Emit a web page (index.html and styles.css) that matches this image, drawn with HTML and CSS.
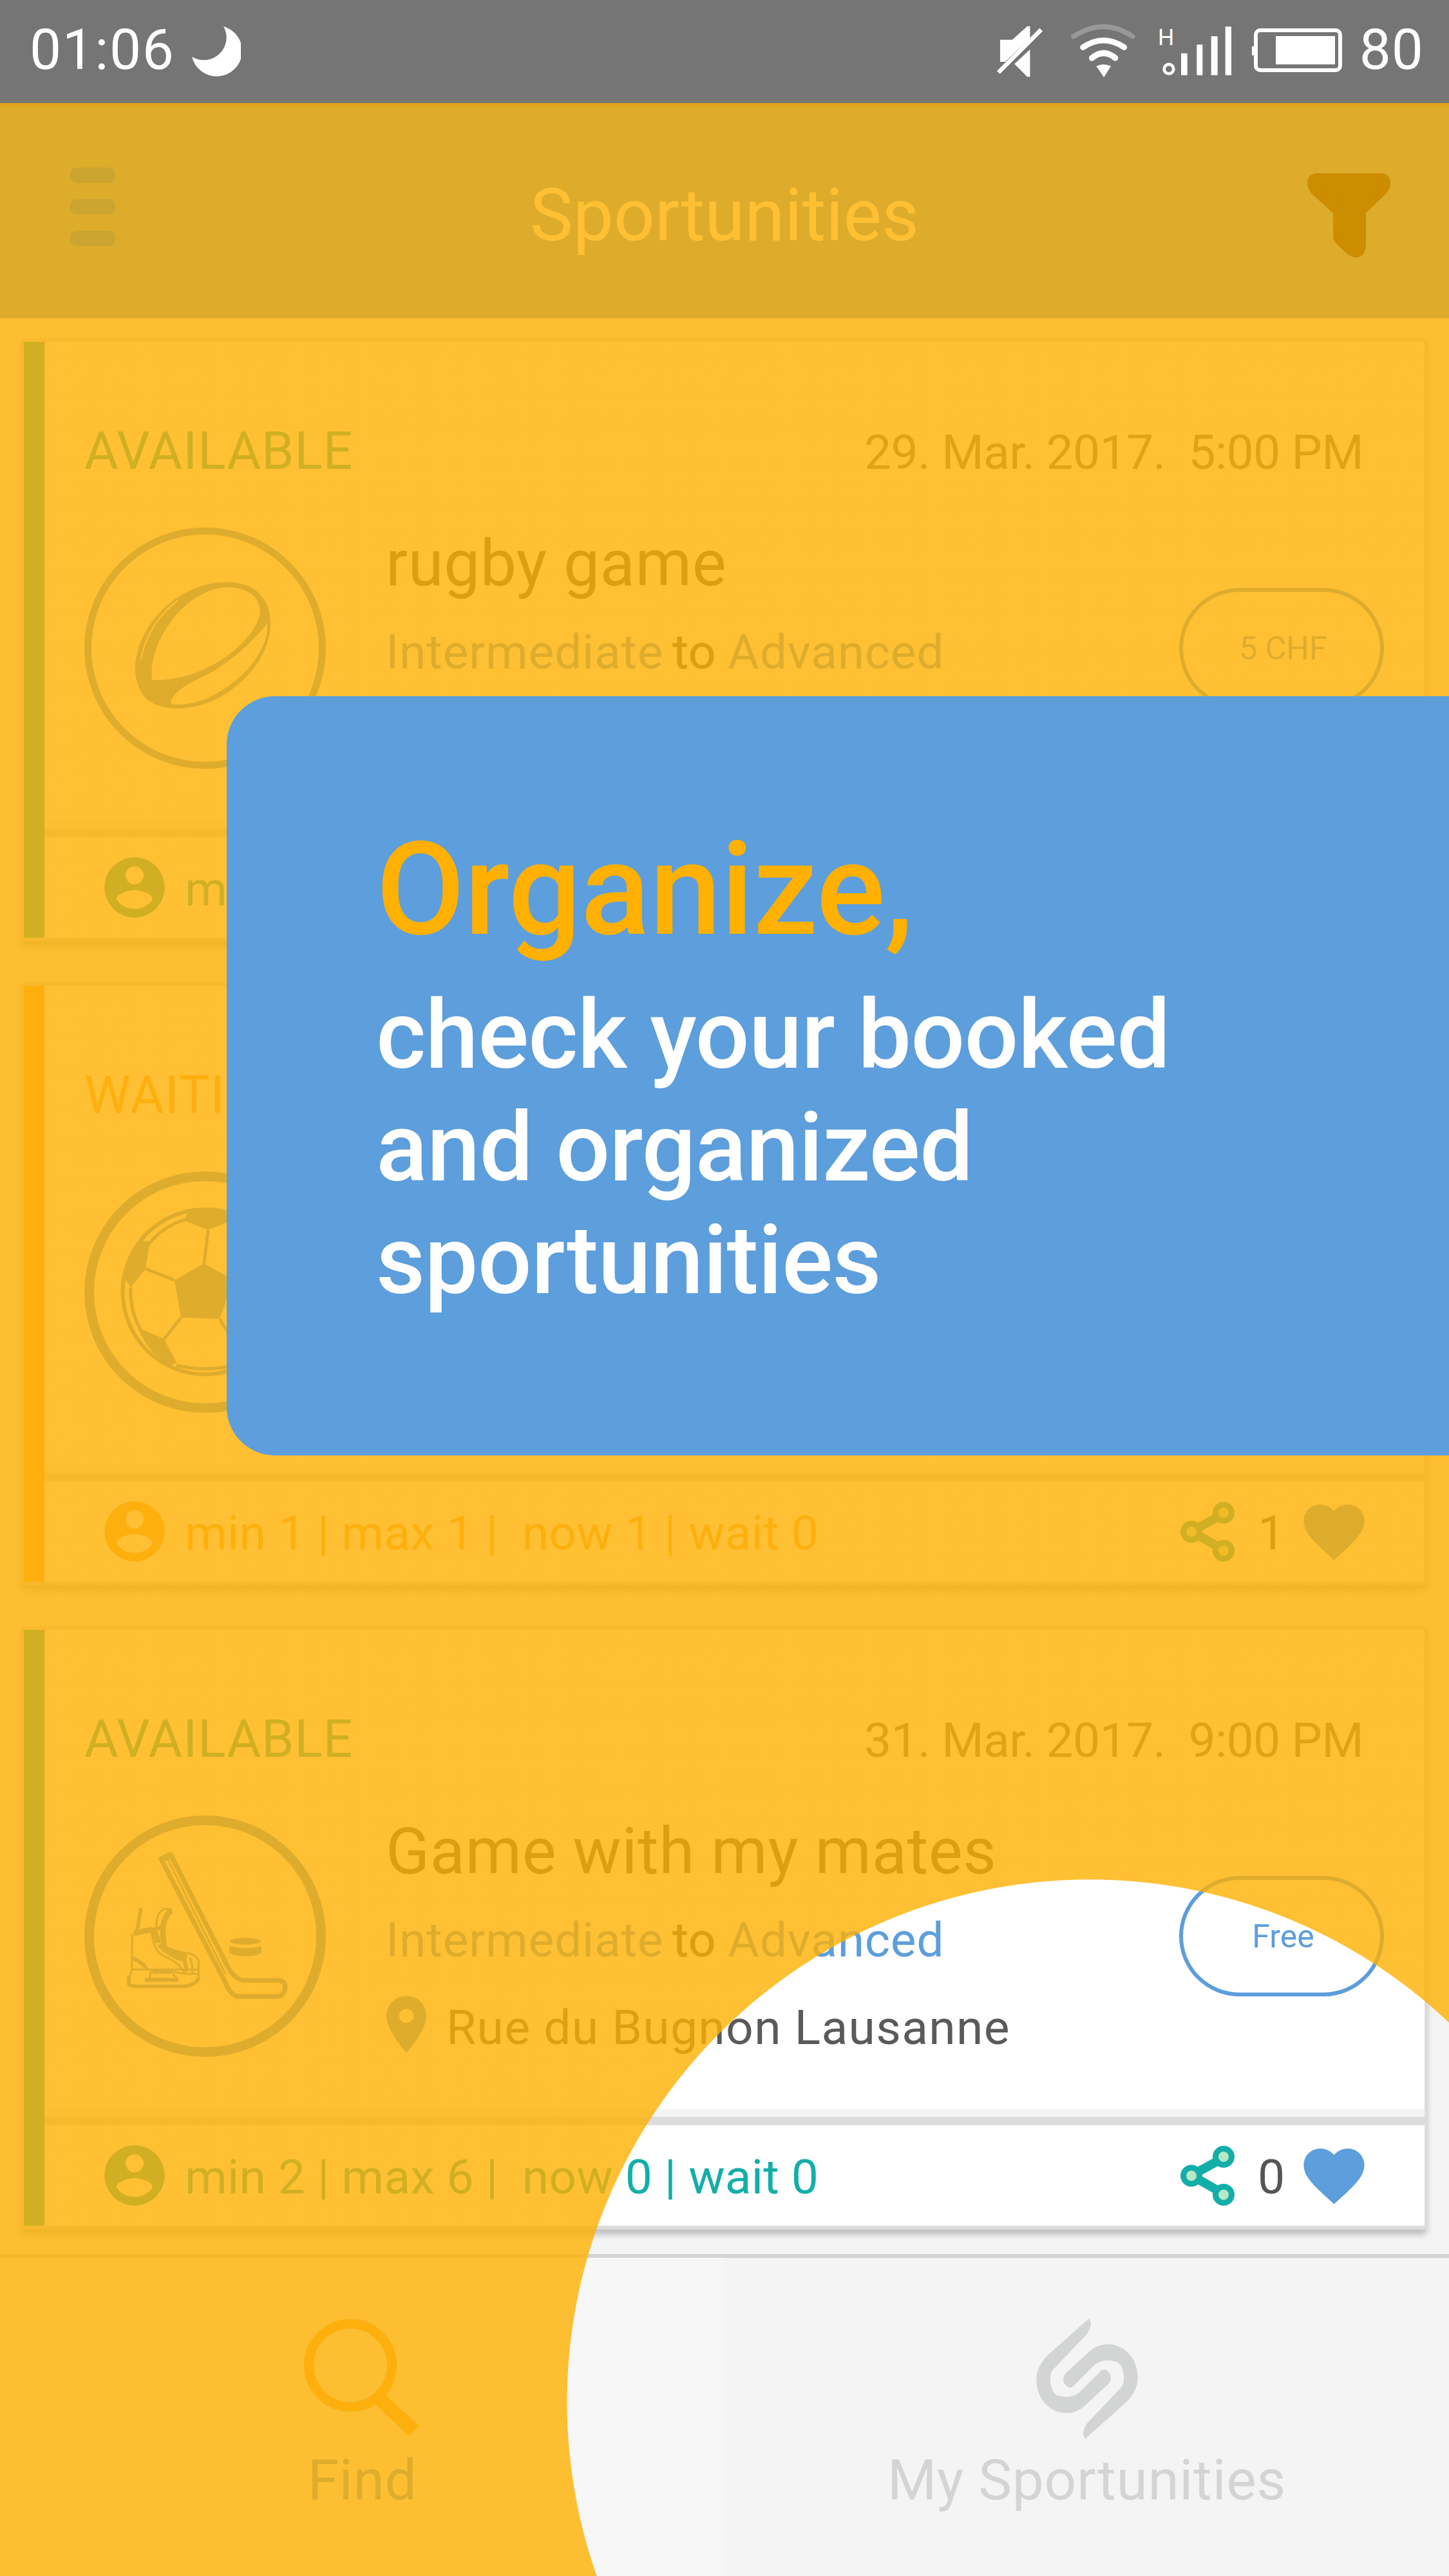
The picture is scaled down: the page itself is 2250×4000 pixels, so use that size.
FILE: index.html
```html
<!DOCTYPE html>
<html lang="en">
<head>
<meta charset="utf-8">
<title>Sportunities</title>
<link rel="stylesheet" href="styles.css">
</head>
<body>
<svg class="defs" aria-hidden="true">
  <symbol id="user" viewBox="0 0 24 24"><path d="M12 2C6.480 2 2 6.480 2 12s4.480 10 10 10 10-4.480 10-10S17.520 2 12 2zm0 3c1.660 0 3 1.340 3 3s-1.340 3-3 3-3-1.340-3-3 1.340-3 3-3zm0 14.200c-2.500 0-4.710-1.280-6-3.220.030-1.990 4-3.080 6-3.080 1.990 0 5.970 1.090 6 3.080-1.290 1.940-3.500 3.220-6 3.220z"/></symbol>
  <symbol id="heart" viewBox="0 0 24 24"><path d="M12 21.350l-1.450-1.320C5.400 15.360 2 12.280 2 8.500 2 5.420 4.420 3 7.500 3c1.740 0 3.410.810 4.500 2.090C13.090 3.810 14.760 3 16.500 3 19.580 3 22 5.420 22 8.500c0 3.780-3.400 6.860-8.550 11.540L12 21.350z"/></symbol>
  <symbol id="share" viewBox="0 0 86 95">
    <path d="M69 19 18 47 69 76" fill="none" stroke="#14aea9" stroke-width="14"/>
    <g fill="#b5e8c4" stroke="#14aea9" stroke-width="9"><circle cx="18" cy="47.500" r="12.500"/><circle cx="68" cy="18" r="12.500"/><circle cx="68" cy="77" r="12.500"/></g>
  </symbol>
</svg>
<div class="phone">
  <div class="statusbar">
    <span class="clock">01:06</span>
    <svg class="moon" viewBox="0 0 76 78"><path d="M49 0A39.500 39.500 0 1 1 0 47A35 35 0 0 0 49 0z" fill="#fff"/></svg>
    <svg class="mute" viewBox="20 90 220 240"><path d="M38 155H95L165 92H178V148L62 258H38z" fill="#fff"/><path d="M30 308 230 108" stroke="#fff" stroke-width="20"/><path d="M178 200V328H165L105 268z" fill="#fff"/></svg>
    <svg class="wifi" viewBox="365 80 305 250"><g fill="none" stroke-linecap="round"><path d="M379 139Q519 47 655 139" stroke="#989898" stroke-width="23"/><path d="M423 190Q519 125 616 190" stroke="#fff" stroke-width="27"/><path d="M465 240Q519 194 574 240" stroke="#fff" stroke-width="28"/></g><path d="M485 278Q519 262 554 278L521 330z" fill="#fff"/></svg>
    <svg class="signal" viewBox="760 60 360 290"><text x="775" y="180" font-size="104" textLength="76" lengthAdjust="spacingAndGlyphs" fill="#fff">H</text><circle cx="826" cy="291" r="22" fill="none" stroke="#fff" stroke-width="14"/><path d="M883 218h29v102h-29zM956 177h27v143h-27zM1023 138h30v182h-30zM1089 93h28v227h-28z" fill="#fff"/></svg>
    <svg class="battery" viewBox="0 0 140 68"><rect x="6" y="3" width="131" height="62" rx="7" fill="none" stroke="#fff" stroke-width="6"/><path d="M0 28h4v14H0zM37 12h92v44H37z" fill="#fff"/></svg>
    <span class="level">80</span>
  </div>

  <div class="app">
    <header class="header">
      <div class="menu"><i></i><i></i><i></i></div>
      <h1 class="title">Sportunities</h1>
      <svg class="funnel" viewBox="0 0 129 131"><path d="M14 0H116Q129 1 129 16Q129 25 121 33L91 62V112Q90 130 75 131Q66 130 56 120L44 108Q40 103 40 98V62L7 32Q0 24 0 14Q1 1 14 0z"/></svg>
    </header>

    <main class="list">
      <article class="card">
        <div class="stripe"></div>
        <div class="inner">
          <div class="top"><span class="status">AVAILABLE</span><time class="date">29. Mar. 2017.&nbsp; 5:00 PM</time></div>
          <div class="body">
            <svg class="sport" viewBox="0 0 375 375"><circle cx="187.500" cy="187.500" r="182" fill="none" stroke="#5d9edc" stroke-width="11"/>
              <path fill="#5d9edc" fill-rule="evenodd" d="M79 220C78 160 140 85 220 85C262 84 290 108 289 151C288 215 215 283 142 281C105 281 80 262 79 220zM105 237C98 175 160 94 222 93C260 93 280 115 270 143C254 185 182 240 105 237zM134 271C140 254 160 243 188 230C225 210 260 180 284 149C288 210 200 280 140 275Q134 275 134 271z"/>
              <path d="M88 205Q98 150 145 113" fill="none" stroke="#fff" stroke-width="2"/></svg>
            <div class="info">
              <h2 class="name">rugby game</h2>
              <p class="levels"><b>Intermediate</b><span>to</span><b>Advanced</b></p>
            </div>
            <div class="pill">5 CHF</div>
          </div>
          <div class="foot"><svg class="user"><use href="#user"/></svg><span class="count">min</span></div>
        </div>
      </article>

      <article class="card waiting">
        <div class="stripe"></div>
        <div class="inner">
          <div class="top"><span class="status">WAITING</span></div>
          <div class="body">
            <svg class="sport" viewBox="0 0 375 375"><g fill="none" stroke="#5d9edc"><circle cx="187.500" cy="187.500" r="180" stroke-width="15"/><circle cx="187.500" cy="187" r="128" stroke-width="6"/><path stroke-width="5" d="M192 91 186 143M95 151 140 169M150 227 124 260M210 229 229 260M232 170 278 151M164 73Q120 83 95 120M72 180Q70 220 92 254M143 301Q187 312 232 301"/></g>
              <path fill="#5d9edc" d="M186 143 140 169 150 227 210 229 232 169zM164 59 154 76 192 91 230 76 213 59Q187 54 164 59zM86 107 102 109 95 151 72 180 60 162Q66 130 86 107zM84 243 124 260 143 297 132 301Q95 278 84 243zM291 243 251 260 232 297 244 301Q282 278 291 243zM289 107 273 109 279 151 303 180 314 162Q309 130 289 107z"/></svg>
          </div>
          <div class="foot"><svg class="user"><use href="#user"/></svg><span class="count">min 1 | max 1 |&nbsp; now 1 | wait 0</span>
            <div class="actions"><svg class="share"><use href="#share"/></svg><span class="likes">1</span><svg class="heart"><use href="#heart"/></svg></div></div>
        </div>
      </article>

      <article class="card">
        <div class="stripe"></div>
        <div class="inner">
          <div class="top"><span class="status">AVAILABLE</span><time class="date">31. Mar. 2017.&nbsp; 9:00 PM</time></div>
          <div class="body">
            <svg class="sport" viewBox="33 27 1125 1125"><g fill="none" stroke="#5d9edc" stroke-linejoin="round"><circle cx="595.500" cy="589.500" r="540" stroke-width="45"/>
              <path stroke-width="22" d="M390 230 435 210 695 720Q730 795 780 795H930Q968 795 968 825Q968 870 930 870H750Q715 865 692 810z"/><path stroke-width="8" d="M418 225 690 765"/><path stroke-width="30" d="M390 232 438 212"/>
              <path stroke-width="17" d="M296 458 280 560M262 580 390 550M240 775V812Q245 822 270 823H500Q555 815 564 785"/>
              <path stroke-width="26" d="M440 470Q390 500 400 600L405 650 510 690M265 575 340 560Q370 570 375 620"/>
              <path stroke-width="9" d="M370 550Q365 475 410 462L440 465M256 580 254 745 240 790M256 690Q300 705 330 745Q430 750 500 765H565V700Q540 665 500 668Q440 655 415 640M345 560Q355 660 400 680Q480 715 500 765M525 690Q540 730 535 765M254 745H565V790M345 750 335 790M445 765 470 795"/>
              <path stroke-width="18" d="M256 690Q290 705 320 735M315 793H470M350 755H440M380 630Q440 690 500 700L510 755"/></g>
              <g fill="#5d9edc"><ellipse cx="783" cy="613" rx="72" ry="16"/><path d="M708 635Q783 655 858 635V665Q845 682 783 683Q720 682 708 665z"/></g></svg>
            <div class="info">
              <h2 class="name">Game with my mates</h2>
              <p class="levels"><b>Intermediate</b><span>to</span><b>Advanced</b></p>
              <p class="place"><svg class="pin" viewBox="5 2 14 20"><path fill-rule="evenodd" d="M12 2C8.130 2 5 5.130 5 9c0 5.250 7 13 7 13s7-7.750 7-13c0-3.870-3.130-7-7-7zm0 9.500c-1.380 0-2.500-1.120-2.500-2.500s1.120-2.500 2.500-2.500 2.500 1.120 2.500 2.500-1.120 2.500-2.500 2.500z"/></svg><span>Rue du Bugnon Lausanne</span></p>
            </div>
            <div class="pill">Free</div>
          </div>
          <div class="foot"><svg class="user"><use href="#user"/></svg><span class="count">min 2 | max 6 |&nbsp; now 0 | wait 0</span>
            <div class="actions"><svg class="share"><use href="#share"/></svg><span class="likes">0</span><svg class="heart"><use href="#heart"/></svg></div></div>
        </div>
      </article>
    </main>

    <nav class="tabs">
      <div class="tab find"><svg class="lens" viewBox="0 0 182 187"><circle cx="72" cy="73" r="64.500" fill="none" stroke="#f7ab45" stroke-width="15"/><path d="M112 120 171 175" stroke="#f7ab45" stroke-width="22"/></svg><span>Find</span></div>
      <div class="tab mine"><svg class="logo" viewBox="0 0 158 187"><g fill="#d3d5d4"><path id="ribbon" d="M82 0Q89 9 79 24L26 80Q21 86 22 97Q24 118 35 120Q52 125 66 116L101 81Q107 77 112 83Q120 92 112 102L74 137Q62 147 46 147Q23 146 9 126Q-2 108 1 86Q5 70 18 57L64 16z"/><use href="#ribbon" transform="rotate(180 79 93.500)"/></g></svg><span>My Sportunities</span></div>
    </nav>

    <div class="overlay"></div>
    <section class="callout">
      <h3>Organize,</h3>
      <p>check your booked<br>and organized<br>sportunities</p>
    </section>
  </div>
</div>
</body>
</html>
```
FILE: styles.css
```css
* { box-sizing: border-box; margin: 0; padding: 0; }
body { font-family: Roboto, "Liberation Sans", sans-serif; font-weight: 400; color: #555; background: #f4f4f4; }
svg { display: block; flex: none; }
.defs { position: absolute; width: 0; height: 0; }
.phone { width: 2250px; height: 4000px; overflow: hidden; display: flex; flex-direction: column; }

.statusbar { height: 160px; flex: none; background: #757575; color: #fff; display: flex; align-items: center; padding: 0 39px 0 46px; font-size: 87.5px; line-height: 100px; }
.clock { width: 252px; letter-spacing: 1.5px; margin-top: -6px; }
.moon { width: 76px; height: 78px; }
.mute { width: 73px; height: 80px; margin-left: auto; }
.wifi { width: 102px; height: 83px; margin-left: 42px; margin-top: -3px; }
.signal { width: 120px; height: 97px; margin-left: 29px; margin-top: -3px; }
.battery { width: 140px; height: 68px; margin-left: 31px; margin-top: -4px; }
.level { margin-left: 27px; margin-top: -6px; letter-spacing: 1px; }

.app { position: relative; flex: 1; min-height: 0; display: flex; flex-direction: column; }
.header { height: 334px; flex: none; background: #5a9cd7; border-top: 5px solid #5f6e9b; display: flex; align-items: center; justify-content: space-between; padding: 0 91px 0 109px; }
.menu { width: 111px; display: flex; flex-direction: column; gap: 25px; margin-top: -18px; }
.menu i { display: block; width: 70px; height: 24px; border-radius: 10px; background: #0078f0; }
.title { font-size: 112.5px; line-height: 130px; font-weight: 400; color: #fff; margin-top: 10px; letter-spacing: -.1px; }
.funnel { width: 129px; height: 131px; margin-top: 10px; }

.list { flex: none; height: 3006px; padding: 37px 38px 0 37px; display: flex; flex-direction: column; gap: 75px; background: #f4f4f4; }
.card { height: 925px; flex: none; display: flex; background: #fff; border-radius: 3px; box-shadow: 0 0 0 6px #ddd, 0 10px 10px 4px rgba(0,0,0,.22); color: #14aea9; }
.waiting { color: #f7ab45; }
.stripe { width: 32px; background: currentColor; }
.inner { flex: 1; display: flex; flex-direction: column; }
.top { height: 283px; padding: 120px 95px 63px 62px; display: flex; justify-content: space-between; align-items: baseline; line-height: 100px; }
.status { font-size: 81px; letter-spacing: .8px; }
.date { font-size: 75px; color: #6b6b6b; letter-spacing: -.65px; }
.body { height: 461px; display: flex; padding: 0 63px 0 62px; }
.sport { width: 375px; height: 375px; margin-top: 5px; }
.info { margin-left: 93px; flex: 1; padding-top: 1px; }
.name { font-size: 100px; line-height: 120px; font-weight: 400; color: #555; white-space: nowrap; letter-spacing: .5px; }
.levels { display: flex; margin-top: 27px; font-size: 75px; line-height: 100px; color: #555; letter-spacing: .7px; }
.levels b { font-weight: 400; color: #5d9edc; }
.levels span { margin: 0 18px 0 14px; -webkit-text-stroke: .5px #555; }
.place { display: flex; margin-top: 36px; font-size: 75px; line-height: 100px; color: #5a5a5a; letter-spacing: 1.3px; white-space: nowrap; }
.pin { width: 62px; height: 89px; margin: 1px 31px 0 1px; fill: #5d9edc; }
.pill { width: 318px; height: 187px; margin-top: 99px; border: 6px solid #5d9edc; border-radius: 94px; color: #5d9edc; font-size: 50px; padding-left: 5px; display: flex; align-items: center; justify-content: center; }
.foot { height: 181px; padding: 25px 84px 0; background: linear-gradient(#f4f4f4 0 12px, #dcdcdc 12px 25px, #fff 25px); display: flex; align-items: center; }
.user { width: 112px; height: 112px; fill: currentColor; margin-right: 22px; }
.count { font-size: 75px; line-height: 100px; margin-top: 3px; letter-spacing: .2px; white-space: nowrap; }
.actions { margin-left: auto; display: flex; align-items: center; }
.share { width: 86px; height: 95px; }
.likes { width: 62px; margin: 3px 0 0 35px; font-size: 75px; line-height: 100px; color: #555; }
.heart { width: 113px; height: 113px; fill: #5d9edc; }

.tabs { flex: 1; display: flex; border-top: 6px solid #d2d5d3; }
.tab { width: 1125px; padding-top: 94px; display: flex; flex-direction: column; align-items: center; font-size: 87.5px; line-height: 100px; color: #d3d5d4; }
.tab span { margin-top: 14px; letter-spacing: .6px; }
.find { background: #f7f7f7; color: #5d9edc; }
.mine { background: #f4f4f4; }
.lens { width: 182px; height: 187px; }
.logo { width: 158px; height: 187px; }

.overlay { position: absolute; inset: 0; background: radial-gradient(circle at 1692px 3570px, transparent 811px, rgba(255,176,0,.8) 812px); }
.callout { position: absolute; left: 352px; right: 0; top: 921px; height: 1179px; border-radius: 75px 0 0 75px; background: #5d9edc; padding: 186px 0 0 232px; font-weight: 500; }
.callout h3 { font-size: 200px; line-height: 230px; font-weight: 500; color: #ffb000; letter-spacing: -.8px; }
.callout p { font-size: 148px; line-height: 175px; color: #fff; margin-top: 23px; letter-spacing: -.8px; }
```
